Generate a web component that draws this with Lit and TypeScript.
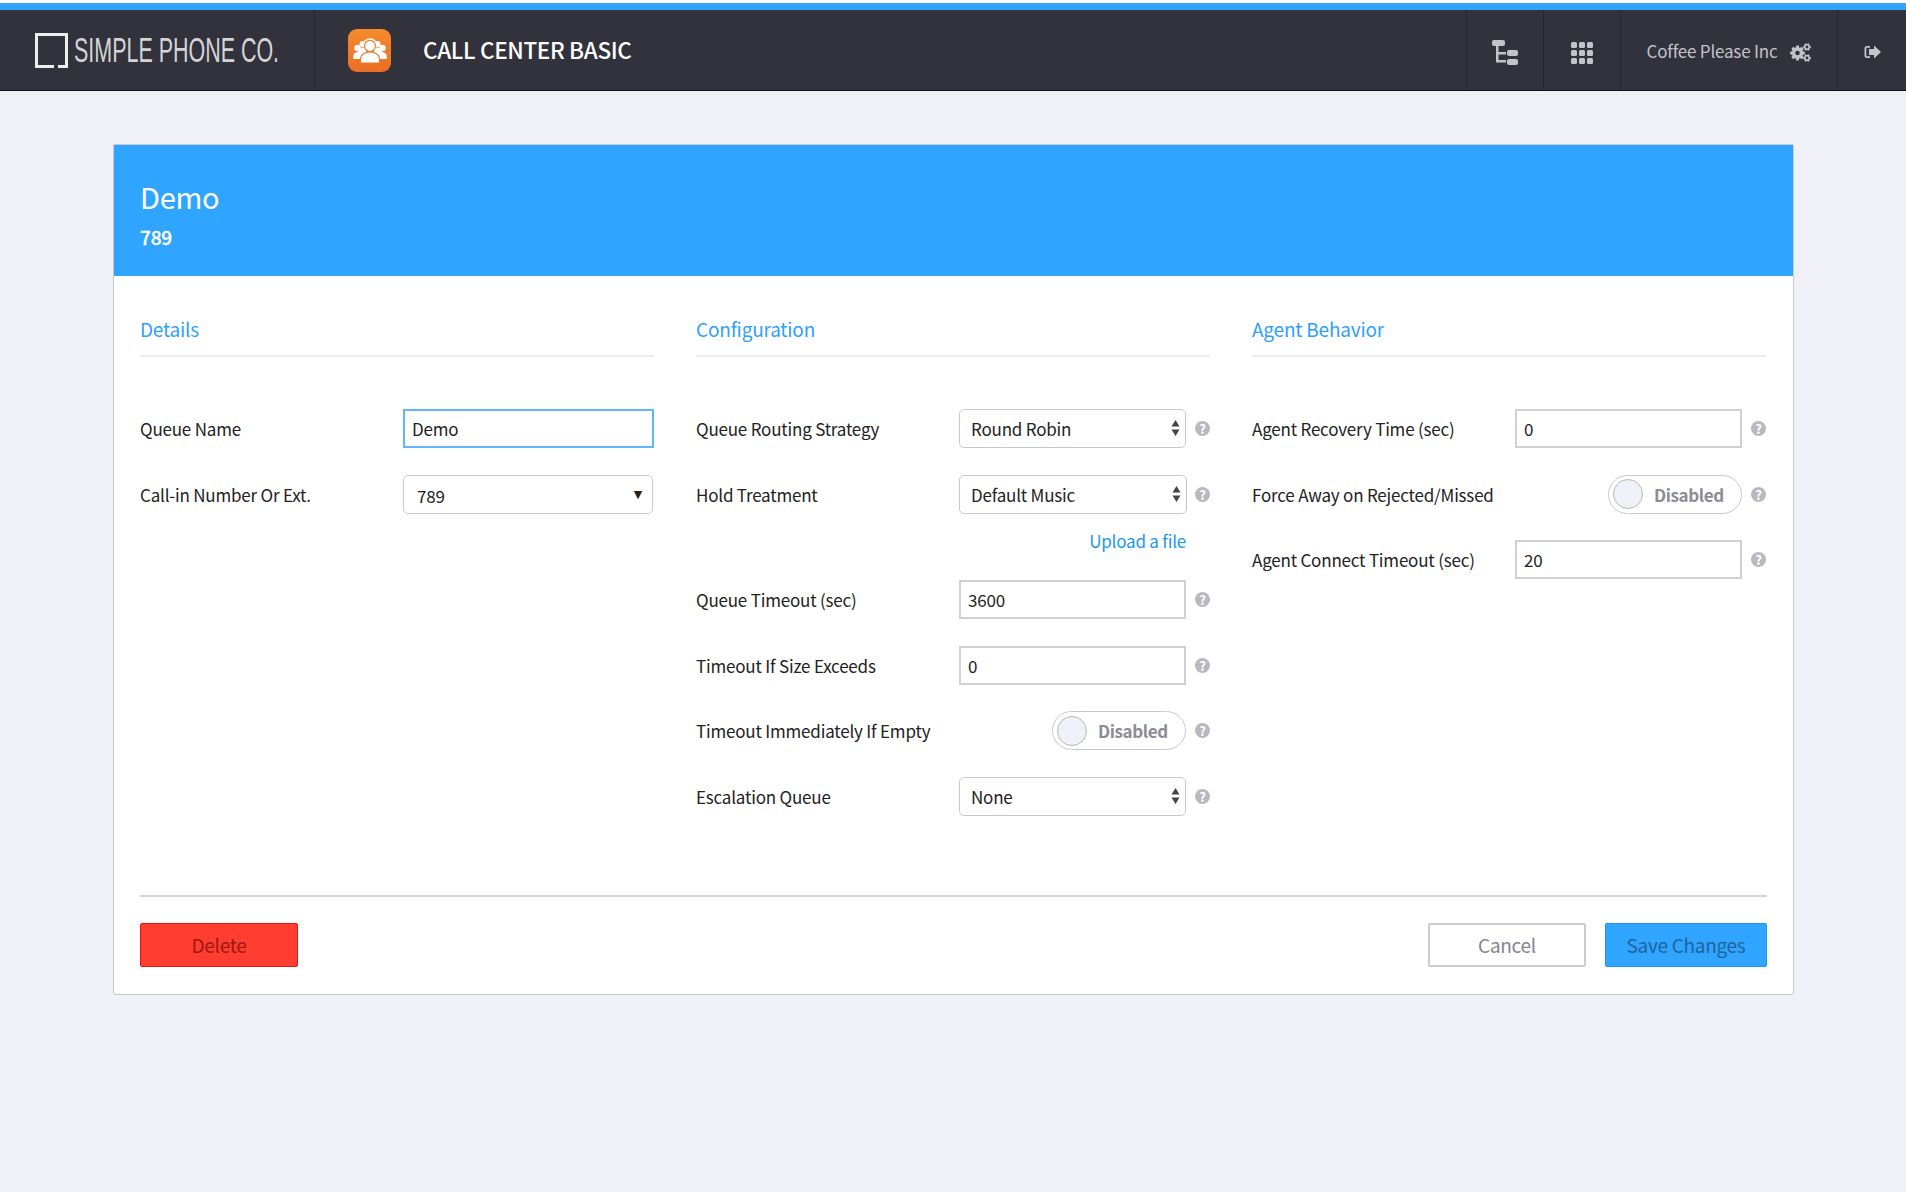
import { LitElement, html, css, svg } from "lit";
import { customElement } from "lit/decorators.js";

const help = html`<span class="help">?</span>`;
const arrows = html`<svg class="updown" viewBox="0 0 9 18" width="9" height="18"><path d="M4.5 1 8.500 7.500H.5zM4.5 17 .5 10.500h8z" fill="#444"/></svg>`;

function gear(cx: number, cy: number, ro: number, ri: number, hole: number, teeth: number) {
  const pts: string[] = [];
  const step = (Math.PI * 2) / teeth;
  for (let i = 0; i < teeth; i++) {
    const a = i * step;
    const at = (r: number, t: number) => `${(cx + r * Math.cos(a + t)).toFixed(2)} ${(cy + r * Math.sin(a + t)).toFixed(2)}`;
    pts.push(at(ri, -step * 0.42), at(ro, -step * 0.22), at(ro, step * 0.22), at(ri, step * 0.42));
  }
  const h = `M${cx - hole} ${cy}a${hole} ${hole} 0 1 0 ${hole * 2} 0a${hole} ${hole} 0 1 0 ${-hole * 2} 0z`;
  return `M${pts.join("L")}z${h}`;
}

@customElement("app-root")
export class AppRoot extends LitElement {
  static styles = css`
    :host { display: block; min-height: 1192px; background: #eff0f8; font-family: "Noto Sans CJK JP", "Noto Sans", sans-serif; color: #222; font-size: 17px; letter-spacing: -0.2px; }
    * { box-sizing: border-box; }
    .strip { height: 3px; background: #fff; }
    .blue { height: 7px; background: #2fa5ff; }
    .bar { height: 81px; background: #31323b; border-bottom: 1px solid #111; display: flex; align-items: stretch; }
    .brand { width: 315px; display: flex; align-items: center; padding-left: 35px; border-right: 1px solid #26272e; }
    .brand-mark { width: 33px; height: 35px; flex: none; }
    .brand-text { font-family: "Liberation Sans", sans-serif; font-weight: 400; font-size: 35px; letter-spacing: 0; color: #d4d4d8; white-space: nowrap; transform: scaleX(.613); transform-origin: left center; margin-left: 6px; }
    .app { display: flex; align-items: center; padding-left: 33px; flex: 1; }
    .app-icon { width: 43px; height: 43px; border-radius: 9px; background: linear-gradient(#f68b2b, #e96e25); display: flex; align-items: center; justify-content: center; }
    .app-name { margin-left: 32px; padding-bottom: 2px; color: #fff; font-size: 22.5px; letter-spacing: -0.35px; font-weight: 500; }
    .cell { border-left: 1px solid #26272e; display: flex; align-items: center; justify-content: center; }
    .c1, .c2 { width: 77px; padding-top: 6px; }
    .c3 { width: 217px; gap: 13px; color: #c3c3cb; }
    .c3 svg { margin-top: 4px; }
    .c4 { width: 69px; padding-top: 4px; }
    main { padding: 53px 112px 0 113px; }
    .card { background: #fff; border: 1px solid #c8c9d2; border-radius: 2px; height: 851px; }
    .head { height: 131px; background: #2fa5ff; color: #fff; padding: 29px 26px 0; }
    .title { font-size: 29px; letter-spacing: -0.3px; line-height: 44px; }
    .sub { font-size: 19px; line-height: 28px; margin-top: 5px; font-weight: 500; -webkit-text-stroke: 0.3px #fff; }
    .cols { display: flex; gap: 42px; padding: 40px 26px 0; height: 619px; }
    .col { width: 514px; display: flex; flex-direction: column; gap: 26.6px; }
    .sec { height: 41px; margin-bottom: 25.4px; border-bottom: 2px solid #eee; color: #2f9fff; font-size: 19px; line-height: 25px; }
    .row { display: flex; align-items: center; height: 39px; }
    .lab { width: 263px; flex: none; white-space: nowrap; }
    .ctl { width: 227px; flex: none; height: 39px; }
    .ctl.full { width: 251px; }
    .help { width: 15px; height: 15px; margin-left: 9px; border-radius: 50%; background: #b8b8be; color: #fff; font-size: 13px; letter-spacing: 0; font-weight: 700; line-height: 15px; text-align: center; flex: none; }
    input { display: block; width: 100%; height: 39px; border: 2px solid #cfcfd4; padding: 0 7px; font: inherit; letter-spacing: inherit; color: #222; background: #fff; outline: none; }
    input.focus { border: 2px solid #62b7fb; }
    .sel { height: 39px; border: 1px solid #c8c9d0; border-radius: 5px; display: flex; align-items: center; justify-content: space-between; padding: 0 5px 0 11px; background: #fff; }
    .sel.wide { margin-right: -1px; }
    .sel.plain { padding: 0 10px 0 13px; width: 250px; }
    .num { position: relative; top: 1px; }
    .caret { font-size: 11px; font-family: "DejaVu Sans", sans-serif; color: #222; }
    .upload { margin-top: -12.6px; height: 26px; line-height: 26px; width: 490px; text-align: right; color: #1a97f5; }
    .ctl.tog { display: flex; justify-content: flex-end; }
    .switch { width: 134px; height: 39px; border: 1px solid #c8c9d0; border-radius: 20px; display: flex; align-items: center; padding-left: 4px; gap: 11px; color: #8c8c94; font-weight: 700; letter-spacing: -0.4px; }
    .knob { width: 30px; height: 30px; border-radius: 50%; background: #eff0f8; border: 1px solid #b4b5bd; flex: none; }
    .foot { margin: 0 26px; border-top: 2px solid #d2d2d8; padding-top: 26px; display: flex; align-items: center; }
    .btn { height: 44px; padding-bottom: 2px; border-radius: 2px; display: flex; align-items: center; justify-content: center; font-size: 19px; letter-spacing: -0.3px; }
    .del { width: 158px; background: #ff3e30; border: 1px solid #e81410; color: #9c1a10; }
    .spacer { flex: 1; }
    .cancel { width: 158px; background: #fff; border: 2px solid #cbcbd1; color: #85858d; }
    .save { width: 162px; margin-left: 19px; background: #2fa5ff; border: 1px solid #1a97f5; color: #20649c; }
  `;

  row(label: string, control: unknown, full = false) {
    return html`<div class="row"><span class="lab">${label}</span><div class="ctl ${full ? "full" : ""}">${control}</div>${full ? "" : help}</div>`;
  }
  sel(text: string, cls = "") {
    return html`<div class="sel ${cls}"><span>${text}</span>${arrows}</div>`;
  }
  toggle(label: string) {
    return html`<div class="row"><span class="lab">${label}</span><div class="ctl tog"><div class="switch"><span class="knob"></span><span>Disabled</span></div></div>${help}</div>`;
  }

  render() {
    return html`
      <div class="strip"></div><div class="blue"></div>
      <header class="bar">
        <div class="brand">
          <svg class="brand-mark" viewBox="0 0 33 35"><path d="M23 33.500h8.500v-32h-30v32H19" fill="none" stroke="#eee" stroke-width="3"/></svg>
          <span class="brand-text">SIMPLE PHONE CO.</span>
        </div>
        <div class="app">
          <div class="app-icon">
            <svg width="34" height="25" viewBox="0 0 34 25" fill="#fff">
              <circle cx="4.500" cy="10" r="3.200"/><circle cx="29.500" cy="10" r="3.200"/>
              <circle cx="9.500" cy="6" r="3"/><circle cx="24.500" cy="6" r="3"/>
              <path d="M0 20c0-4 2-6 5-6s4 1 4 2v5H1z"/><path d="M34 20c0-4-2-6-5-6s-4 1-4 2v5h8z"/>
              <path d="M5 14c0-3 2-4.500 5-4.500h3v8H5z"/><path d="M29 14c0-3-2-4.500-5-4.500h-3v8h8z"/>
              <circle cx="17" cy="8" r="5.500" stroke="#f07a28" stroke-width="1.200"/>
              <path d="M10 8a7 7 0 0 1 14 0" fill="none" stroke="#fff" stroke-width="1.300"/>
              <path d="M7.500 25v-4c0-4 4-7 9.500-7s9.500 3 9.500 7v4z" stroke="#f07a28" stroke-width="1.200"/>
            </svg>
          </div>
          <span class="app-name">CALL CENTER BASIC</span>
        </div>
        <div class="cell c1">
          <svg width="26" height="26" viewBox="0 0 26 26" fill="#c3c3cb">
            <rect x="0" y="0" width="13" height="6" rx="2"/>
            <rect x="15" y="10" width="11" height="6" rx="2"/>
            <rect x="15" y="19" width="11" height="6" rx="2"/>
            <path d="M4 6h2.500v6H14v2.500H6.500V20H14v2.500H4z"/>
          </svg>
        </div>
        <div class="cell c2">
          <svg width="22" height="22" viewBox="0 0 22 22" fill="#c3c3cb">
            ${[0, 8, 16].flatMap((y) => [0, 8, 16].map((x) => svg`<rect x=${x} y=${y} width="6" height="6" rx="1.500"/>`))}
          </svg>
        </div>
        <div class="cell c3">
          <span>Coffee Please Inc</span>
          <svg width="21" height="19" viewBox="0 0 21 19" fill="#c3c3cb" fill-rule="evenodd">
            <path d=${gear(7.5, 10, 7.5, 5.6, 2.3, 8)} />
            <path d=${gear(17, 4, 3.9, 2.9, 1.4, 6)} />
            <path d=${gear(17, 15, 3.9, 2.9, 1.4, 6)} />
          </svg>
        </div>
        <div class="cell c4">
          <svg width="17" height="14" viewBox="0 0 17 14" fill="#c3c3cb">
            <path d="M6 1H3a2.500 2.500 0 0 0-2.500 2.500v7A2.500 2.500 0 0 0 3 13h3v-1.800H3a.7.700 0 0 1-.7-.7v-7a.7.700 0 0 1 .7-.7h3z"/>
            <path d="M10 .5 17 7l-7 6.500V10H5V4h5z"/>
          </svg>
        </div>
      </header>
      <main>
        <section class="card">
          <div class="head">
            <div class="title">Demo</div>
            <div class="sub">789</div>
          </div>
          <div class="cols">
            <div class="col">
              <div class="sec">Details</div>
              ${this.row("Queue Name", html`<input class="focus" .value=${"Demo"} />`, true)}
              ${this.row("Call-in Number Or Ext.", html`<div class="sel plain"><span class="num">789</span><span class="caret">▼</span></div>`, true)}
            </div>
            <div class="col">
              <div class="sec">Configuration</div>
              ${this.row("Queue Routing Strategy", this.sel("Round Robin"))}
              ${this.row("Hold Treatment", this.sel("Default Music", "wide"))}
              <div class="upload">Upload a file</div>
              ${this.row("Queue Timeout (sec)", html`<input .value=${"3600"} />`)}
              ${this.row("Timeout If Size Exceeds", html`<input .value=${"0"} />`)}
              ${this.toggle("Timeout Immediately If Empty")}
              ${this.row("Escalation Queue", this.sel("None"))}
            </div>
            <div class="col">
              <div class="sec">Agent Behavior</div>
              ${this.row("Agent Recovery Time (sec)", html`<input .value=${"0"} />`)}
              ${this.toggle("Force Away on Rejected/Missed")}
              ${this.row("Agent Connect Timeout (sec)", html`<input .value=${"20"} />`)}
            </div>
          </div>
          <div class="foot">
            <div class="btn del">Delete</div>
            <div class="spacer"></div>
            <div class="btn cancel">Cancel</div>
            <div class="btn save">Save Changes</div>
          </div>
        </section>
      </main>
    `;
  }
}
